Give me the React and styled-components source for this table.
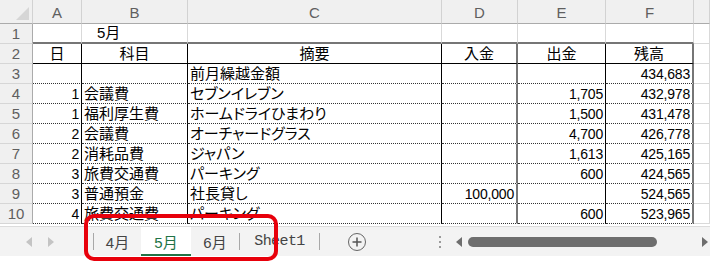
import React from "react";
import styled, { createGlobalStyle } from "styled-components";

const GlobalStyle = createGlobalStyle`
  body {
    margin: 0;
    background: #fff;
    font-family: "Liberation Sans", "Noto Sans CJK JP", sans-serif;
  }
`;

const WIDTHS = [33, 49, 106, 254, 76, 88, 88, 16];
const LIGHT = "1px solid #d9d9d9";
const BLACK = "1px solid #000";
const THICK = "2px solid #767676";
const DOT = "1px dotted #333";

const Sheet = styled.div`
  position: relative;
  width: 710px;
  height: 263px;
  overflow: hidden;
  background: #fff;
`;

const Grid = styled.div`
  height: 226px;
  overflow: hidden;
`;

const Row = styled.div`
  display: flex;
  height: ${(p) => p.$h || 20}px;
`;

const HeadCell = styled.div`
  box-sizing: border-box;
  width: ${(p) => p.$w}px;
  flex: none;
  background: #f0f0f0;
  border-right: 1px solid #d2d2d2;
  border-bottom: 1px solid #ababab;
  color: #5f5f5f;
  font-size: 15px;
  display: flex;
  align-items: center;
  justify-content: center;
  padding-top: 2px;
`;

const Corner = styled(HeadCell)`
  position: relative;
  &::after {
    content: "";
    position: absolute;
    right: 3px;
    bottom: 3px;
    border-style: solid;
    border-width: 0 0 13px 13px;
    border-color: transparent transparent #d6d6d6 transparent;
  }
`;

const RowNum = styled.div`
  box-sizing: border-box;
  width: 33px;
  flex: none;
  background: #f0f0f0;
  border-right: 1px solid #ababab;
  border-bottom: 1px solid #d6d6d6;
  color: #5f5f5f;
  font-size: 15px;
  display: flex;
  align-items: center;
  justify-content: center;
`;

const Cell = styled.div`
  box-sizing: border-box;
  width: ${(p) => p.$w}px;
  flex: none;
  border-right: ${(p) => p.$r || LIGHT};
  border-bottom: ${(p) => p.$b || LIGHT};
  display: flex;
  align-items: flex-end;
  justify-content: ${(p) =>
    p.$align === "right" ? "flex-end" : p.$align === "center" ? "center" : "flex-start"};
  padding: 0 2px 0 ${(p) => p.$indent || 2}px;
  font-size: 15px;
  line-height: 18px;
  color: #000;
  white-space: nowrap;
  overflow: visible;
  font-feature-settings: "palt";
`;

const Num = styled.span`
  font-family: "Liberation Sans", sans-serif;
  font-size: 14px;
  letter-spacing: -0.2px;
`;

const TabBar = styled.div`
  display: flex;
  align-items: stretch;
  height: 29px;
  background: #f3f3f3;
  border-top: 1px solid #dcdcdc;
`;

const Nav = styled.div`
  width: 93px;
  flex: none;
  display: flex;
  align-items: center;
  gap: 16px;
  padding-left: 26px;
  box-sizing: border-box;
`;

const Tri = styled.span`
  width: 0;
  height: 0;
  border-top: 5px solid transparent;
  border-bottom: 5px solid transparent;
  ${(p) =>
    p.$dir === "left"
      ? `border-right: 6px solid ${p.$c || "#c4c4c4"};`
      : `border-left: 6px solid ${p.$c || "#c4c4c4"};`}
`;

const Sep = styled.span`
  width: 1px;
  height: 17px;
  align-self: center;
  background: #a8a8a8;
  flex: none;
`;

const Tab = styled.div`
  width: ${(p) => p.$w}px;
  flex: none;
  display: flex;
  align-items: center;
  justify-content: center;
  font-family: "Liberation Sans", "Noto Sans CJK JP", sans-serif;
  font-size: 15px;
  color: ${(p) => (p.$active ? "#217346" : "#444")};
  background: ${(p) => (p.$active ? "#fff" : "transparent")};
  border-bottom: ${(p) => (p.$active ? "2px solid #217346" : "2px solid transparent")};
  box-sizing: border-box;
  padding-top: 1px;
`;

const Sheet1 = styled(Tab)`
  font-family: "Liberation Mono", monospace;
  font-size: 15px;
  letter-spacing: -0.6px;
`;

const AddBtn = styled.div`
  margin-left: 28px;
  width: 18px;
  height: 18px;
  align-self: center;
  flex: none;
  border: 1.5px solid #666;
  border-radius: 50%;
  box-sizing: border-box;
  display: flex;
  align-items: center;
  justify-content: center;
`;

const Dots = styled.div`
  margin-left: 73px;
  align-self: center;
  display: flex;
  flex-direction: column;
  gap: 3px;
  span {
    width: 2px;
    height: 2px;
    background: #9a9a9a;
  }
`;

const Scroll = styled.div`
  margin-left: 15px;
  flex: 1;
  display: flex;
  align-items: center;
  gap: 6px;
  padding-right: 2px;
`;

const Thumb = styled.div`
  width: 189px;
  height: 10px;
  border-radius: 5px;
  background: #6e6e6e;
`;

const Spacer = styled.div`
  flex: 1;
`;

const Highlight = styled.div`
  position: absolute;
  left: 84px;
  top: 214px;
  width: 194px;
  height: 47px;
  border: 4px solid #e8000b;
  border-radius: 10px;
  box-sizing: border-box;
  pointer-events: none;
`;

const RIGHTS = [BLACK, BLACK, BLACK, THICK, BLACK, THICK, LIGHT];

const DATA = [
  ["", "", "前月繰越金額", "", "", "434,683"],
  ["1", "会議費", "セブンイレブン", "", "1,705", "432,978"],
  ["1", "福利厚生費", "ホームドライひまわり", "", "1,500", "431,478"],
  ["2", "会議費", "オーチャードグラス", "", "4,700", "426,778"],
  ["2", "消耗品費", "ジャパン", "", "1,613", "425,165"],
  ["3", "旅費交通費", "パーキング", "", "600", "424,565"],
  ["3", "普通預金", "社長貸し", "100,000", "", "524,565"],
  ["4", "旅費交通費", "パーキング", "", "600", "523,965"],
];

const HEAD2 = ["日", "科目", "摘要", "入金", "出金", "残高"];

export default function App() {
  const cols = WIDTHS.slice(1);
  return (
    <Sheet>
      <GlobalStyle />
      <Grid>
        <Row $h={24}>
          <Corner $w={33} />
          {["A", "B", "C", "D", "E", "F", ""].map((l, i) => (
            <HeadCell key={i} $w={cols[i]}>
              {l}
            </HeadCell>
          ))}
        </Row>
        <Row>
          <RowNum>1</RowNum>
          {cols.map((w, i) => (
            <Cell key={i} $w={w} $b={i < 6 ? THICK : LIGHT} $indent={i === 1 ? 15 : 2}>
              {i === 1 ? "5月" : ""}
            </Cell>
          ))}
        </Row>
        <Row>
          <RowNum>2</RowNum>
          {cols.map((w, i) => (
            <Cell key={i} $w={w} $r={RIGHTS[i]} $b={i < 6 ? BLACK : LIGHT} $align="center">
              {HEAD2[i] || ""}
            </Cell>
          ))}
        </Row>
        {DATA.map((r, ri) => (
          <Row key={ri}>
            <RowNum>{ri + 3}</RowNum>
            {cols.map((w, i) => {
              const v = r[i] || "";
              const isNum = i === 0 || i >= 3;
              return (
                <Cell
                  key={i}
                  $w={w}
                  $r={RIGHTS[i]}
                  $b={i < 6 ? DOT : LIGHT}
                  $align={isNum ? "right" : "left"}
                >
                  {isNum ? <Num>{v}</Num> : v}
                </Cell>
              );
            })}
          </Row>
        ))}
      </Grid>
      <TabBar>
        <Nav>
          <Tri $dir="left" />
          <Tri $dir="right" />
        </Nav>
        <Sep />
        <Tab $w={47}>4月</Tab>
        <Tab $w={50} $active>
          5月
        </Tab>
        <Tab $w={48}>6月</Tab>
        <Sep />
        <Sheet1 $w={79}>Sheet1</Sheet1>
        <Sep />
        <AddBtn>
          <svg width="10" height="10" viewBox="0 0 10 10">
            <path d="M5 0.5V9.5M0.5 5H9.5" stroke="#555" strokeWidth="1.5" />
          </svg>
        </AddBtn>
        <Dots>
          <span />
          <span />
          <span />
        </Dots>
        <Scroll>
          <Tri $dir="left" $c="#6e6e6e" />
          <Thumb />
          <Spacer />
          <Tri $dir="right" $c="#6e6e6e" />
        </Scroll>
      </TabBar>
      <Highlight />
    </Sheet>
  );
}
